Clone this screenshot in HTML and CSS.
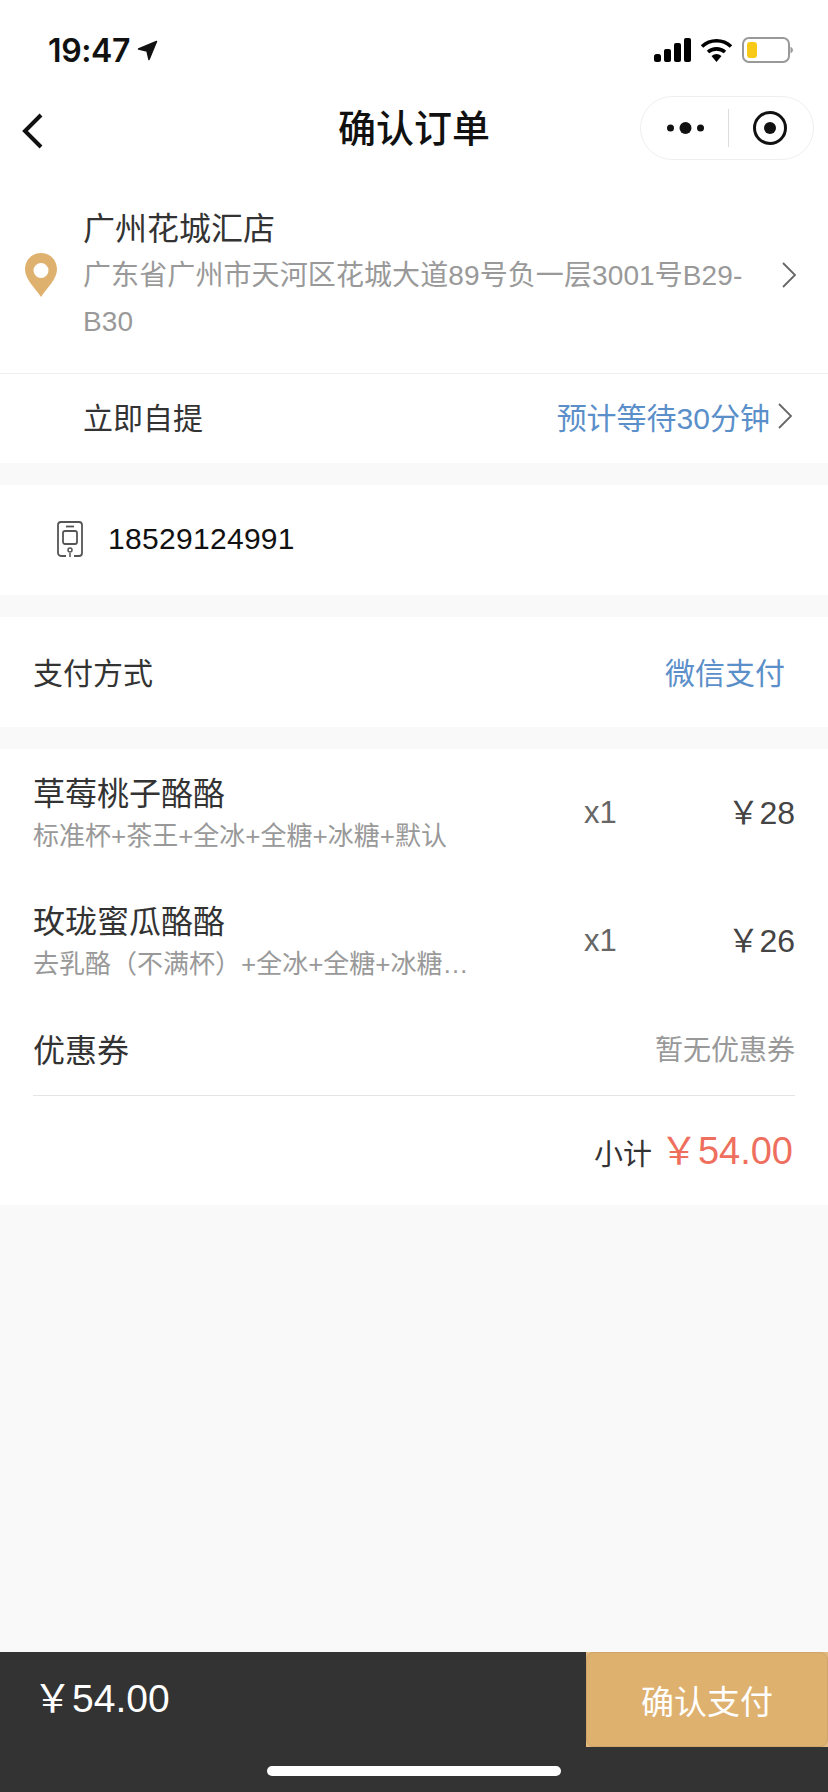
FILE: index.html
```html
<!DOCTYPE html>
<html lang="en">

<head>
    <meta charset="UTF-8">
    <title>确认订单</title>
    <link rel="stylesheet" href="styles.css">
</head>

<body>
    <div class="status-bar">
        <div class="status-time">
            19:47
            <svg class="status-arrow" width="21" height="21" viewBox="0 0 21 21"><path d="M19.500 1.500 L1.500 9 L10 11 L12 19.500 Z" fill="#111" stroke="#111" stroke-width="1.500" stroke-linejoin="round"/></svg>
        </div>
        <div class="status-icons">
            <svg width="37" height="24" viewBox="0 0 37 24"><rect x="0" y="16" width="7" height="8" rx="2.500" fill="#000"/><rect x="10" y="11" width="7" height="13" rx="2" fill="#000"/><rect x="20" y="5" width="7" height="19" rx="2" fill="#000"/><rect x="30" y="0" width="7" height="24" rx="2" fill="#000"/></svg>
            <svg width="33" height="24" viewBox="0 0 33 24"><path d="M2 8.500 A21 21 0 0 1 31 8.500" fill="none" stroke="#000" stroke-width="3.600"/><path d="M8 14 A13 13 0 0 1 25 14" fill="none" stroke="#000" stroke-width="3.600"/><path d="M11.500 18 A8 8 0 0 1 21.500 18 L16.500 24 Z" fill="#000"/></svg>
            <svg width="51" height="26" viewBox="0 0 51 26"><rect x="1" y="1" width="46" height="24" rx="6" fill="#fff" stroke="#999" stroke-width="2"/><rect x="5" y="5" width="10" height="16" rx="3" fill="#f9c917"/><path d="M48.500 9.500 Q51 11 51 13 Q51 15 48.500 16.500 Z" fill="#999"/></svg>
        </div>
    </div>

    <nav class="nav-bar">
        <svg class="nav-back" width="24" height="38" viewBox="0 0 24 38"><path d="M20 3 L4 19 L20 35" fill="none" stroke="#111" stroke-width="4"/></svg>
        <div class="nav-title">确认订单</div>
        <div class="capsule">
            <svg width="37" height="14" viewBox="0 0 37 14"><circle cx="3.500" cy="7" r="3.500" fill="#111"/><circle cx="18.500" cy="7" r="6" fill="#111"/><circle cx="33.500" cy="7" r="3.500" fill="#111"/></svg>
            <span class="capsule-line"></span>
            <svg width="34" height="34" viewBox="0 0 34 34"><circle cx="17" cy="17" r="15.500" fill="none" stroke="#111" stroke-width="3"/><circle cx="17" cy="17" r="6" fill="#111"/></svg>
        </div>
    </nav>

    <section class="card">
        <div class="store">
            <svg class="store-pin" width="32" height="44" viewBox="0 0 32 44"><path fill-rule="evenodd" d="M16 0 C7 0 0 7 0 16.500 C0 26 10 35 16 44 C22 35 32 26 32 16.500 C32 7 25 0 16 0 Z M16 10 A7.500 7.500 0 1 1 16 25 A7.500 7.500 0 1 1 16 10 Z" fill="#deb16f"/></svg>
            <div class="store-info">
                <div class="store-name">广州花城汇店</div>
                <div class="store-address">广东省广州市天河区花城大道89号负一层3001号B29-B30</div>
            </div>
            <svg class="chevron" width="15" height="26" viewBox="0 0 15 26"><path d="M1 1 L13 13 L1 25" fill="none" stroke="#666" stroke-width="1.800"/></svg>
        </div>
        <div class="pickup">
            <span>立即自提</span>
            <span class="pickup-wait">预计等待30分钟<svg class="chevron" width="15" height="26" viewBox="0 0 15 26"><path d="M1 1 L13 13 L1 25" fill="none" stroke="#666" stroke-width="1.800"/></svg></span>
        </div>
    </section>

    <section class="card phone">
        <svg width="26" height="37" viewBox="0 0 26 37"><path d="M9 35 H4 A3 3 0 0 1 1 32 V4 A3 3 0 0 1 4 1 H22 A3 3 0 0 1 25 4 V32 A3 3 0 0 1 22 35 H17" fill="none" stroke="#555" stroke-width="1.800"/><path d="M9 5.500 H17" stroke="#555" stroke-width="1.800"/><rect x="6" y="10" width="14" height="13" rx="2" fill="none" stroke="#555" stroke-width="1.800"/><circle cx="13" cy="29" r="2" fill="none" stroke="#555" stroke-width="1.500"/><path d="M13 32 V36" stroke="#555" stroke-width="1.500"/></svg>
        <span>18529124991</span>
    </section>

    <section class="card payment">
        <span>支付方式</span>
        <span class="payment-type">微信支付</span>
    </section>

    <section class="card goods">
        <div class="goods-row">
            <div class="goods-info">
                <div class="goods-name">草莓桃子酪酪</div>
                <div class="goods-spec">标准杯+茶王+全冰+全糖+冰糖+默认</div>
            </div>
            <div class="goods-count">x1</div>
            <div class="goods-price">￥28</div>
        </div>
        <div class="goods-row">
            <div class="goods-info">
                <div class="goods-name">玫珑蜜瓜酪酪</div>
                <div class="goods-spec">去乳酪（不满杯）+全冰+全糖+冰糖…</div>
            </div>
            <div class="goods-count">x1</div>
            <div class="goods-price">￥26</div>
        </div>
        <div class="coupon">
            <span>优惠券</span>
            <span class="coupon-none">暂无优惠券</span>
        </div>
        <div class="subtotal">
            <span class="subtotal-label">小计</span>
            <span class="subtotal-price">￥54.00</span>
        </div>
    </section>

    <div class="spacer"></div>

    <footer class="pay-bar">
        <div class="pay-main">
            <div class="pay-total">￥54.00</div>
            <div class="pay-action">
                <button class="pay-button">确认支付</button>
            </div>
        </div>
        <div class="home-bar"></div>
    </footer>
</body>

</html>
```

FILE: styles.css
```css
* {
    box-sizing: border-box;
}

html,
body {
    height: 100%;
}

body {
    margin: 0;
    display: flex;
    flex-direction: column;
    background-color: #f9f9f9;
    color: #333;
    font-family: "Liberation Sans", "Noto Sans CJK SC", sans-serif;
}

/* Status bar */
.status-bar {
    display: flex;
    justify-content: space-between;
    align-items: center;
    height: 88px;
    padding: 12px 35px 0 48px;
    background-color: #fff;
}

.status-time {
    display: flex;
    align-items: center;
    gap: 7px;
    color: #111;
    font-family: Inter, sans-serif;
    font-size: 32px;
    font-weight: 600;
    letter-spacing: -0.4px;
}

.status-icons {
    display: flex;
    align-items: center;
    gap: 9px;
}

/* Title bar */
.nav-bar {
    position: relative;
    display: flex;
    justify-content: center;
    align-items: center;
    height: 100px;
    padding-bottom: 26px;
    background-color: #fff;
}

.nav-back {
    position: absolute;
    left: 21px;
    top: 24px;
}

.nav-title {
    color: #111;
    font-size: 38px;
    font-weight: 500;
}

.capsule {
    position: absolute;
    right: 14px;
    top: 8px;
    display: flex;
    justify-content: space-between;
    align-items: center;
    width: 174px;
    height: 64px;
    padding: 0 26px;
    border: 1px solid #efefef;
    border-radius: 32px;
}

.capsule-line {
    width: 1px;
    height: 38px;
    background-color: #ddd;
}

/* Sections */
.card {
    background-color: #fff;
    margin-bottom: 22px;
}

.store {
    display: flex;
    align-items: center;
    height: 186px;
    padding: 0 31px 12px 25px;
    border-bottom: 1px solid #eee;
}

.store-pin {
    flex-shrink: 0;
}

.store-info {
    flex: 1;
    padding: 4px 28px 0 26px;
}

.store-name {
    font-size: 32px;
    line-height: 42px;
}

.store-address {
    margin-top: 3px;
    color: #999;
    font-size: 28px;
    line-height: 46px;
    letter-spacing: 0.1px;
}

.pickup {
    display: flex;
    justify-content: space-between;
    align-items: center;
    height: 89px;
    padding: 0 35px 5px 83px;
    font-size: 30px;
}

.pickup-wait {
    display: flex;
    align-items: center;
    gap: 8px;
    color: #5b8fc9;
}

.phone {
    display: flex;
    align-items: center;
    gap: 25px;
    height: 110px;
    padding: 0 0 2px 57px;
    color: #111;
    font-size: 30px;
    letter-spacing: 0.3px;
}

.payment {
    display: flex;
    justify-content: space-between;
    align-items: center;
    height: 110px;
    padding: 0 43px 2px 33px;
    font-size: 30px;
}

.payment-type {
    color: #5b8fc9;
}

/* Order items */
.goods {
    margin-bottom: 0;
    padding: 0 33px;
}

.goods-row {
    display: flex;
    align-items: center;
    height: 128px;
}

.goods-info {
    width: 551px;
}

.goods-name {
    font-size: 32px;
    line-height: 42px;
}

.goods-spec {
    margin-top: 4px;
    color: #999;
    font-size: 26px;
    line-height: 34px;
    white-space: nowrap;
}

.goods-count {
    width: 60px;
    color: #666;
    font-size: 31px;
}

.goods-price {
    flex: 1;
    padding-bottom: 6px;
    color: #444;
    font-size: 32px;
    text-align: right;
}

.coupon {
    display: flex;
    justify-content: space-between;
    align-items: center;
    height: 91px;
    padding-bottom: 4px;
    border-bottom: 1px solid #e5e5e5;
    font-size: 32px;
}

.coupon-none {
    color: #999;
    font-size: 28px;
}

.subtotal {
    display: flex;
    justify-content: flex-end;
    align-items: center;
    gap: 8px;
    height: 109px;
    padding: 3px 2px 0 0;
}

.subtotal-label {
    font-size: 29px;
}

.subtotal-price {
    padding-bottom: 9px;
    color: #ef6f5e;
    font-size: 38px;
}

.spacer {
    flex: 1;
}

/* Bottom bar */
.pay-bar {
    height: 140px;
    background-color: #333;
}

.pay-main {
    display: flex;
    justify-content: space-between;
    align-items: center;
    height: 95px;
}

.pay-total {
    padding: 0 0 9px 33px;
    color: #fff;
    font-size: 39px;
}

.pay-action {
    width: 242px;
    height: 95px;
    background-color: #e2b97f;
}

.pay-button {
    width: 100%;
    height: 100%;
    border: 1px solid #cfa468;
    border-radius: 8px;
    background-color: #deb16f;
    color: #fff;
    font-family: inherit;
    font-size: 33px;
}

.home-bar {
    width: 294px;
    height: 10px;
    margin: 19px auto 0;
    border-radius: 5px;
    background-color: #fff;
}
```
